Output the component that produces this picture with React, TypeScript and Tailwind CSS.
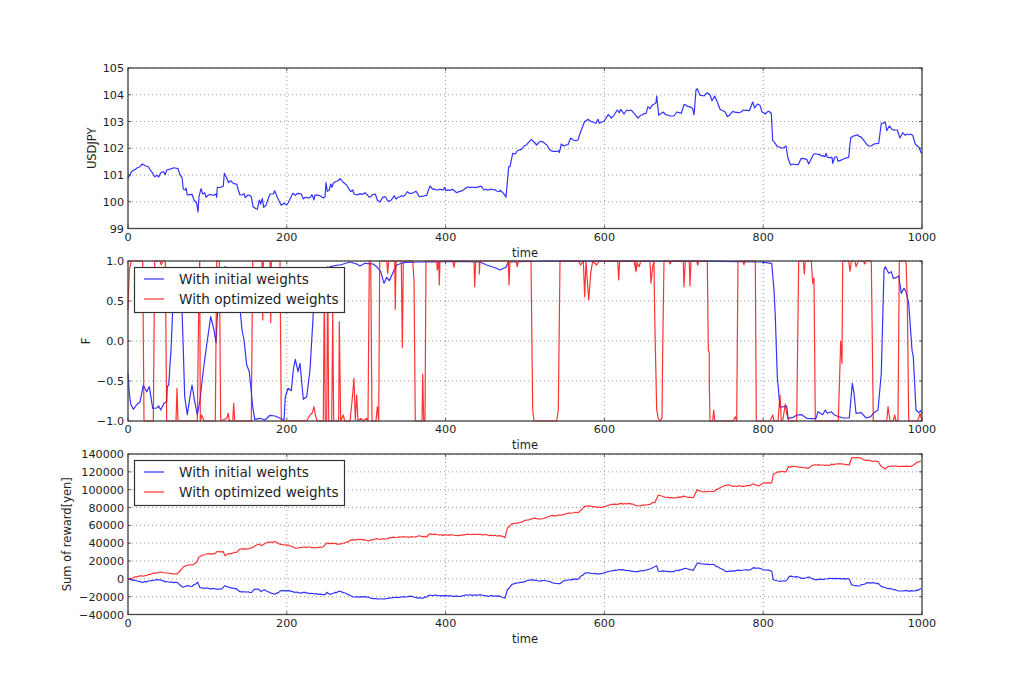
import React from 'react'

const LEFT = 128
const RIGHT = 922
const xTicks = ['0', '200', '400', '600', '800', '1000']

// points are read off crops at 3x, so scale them back to page coords
const crop = (ox: number, oy: number, pts: string) =>
  pts
    .trim()
    .split(/\s+/)
    .map((p) => {
      const [x, y] = p.split(',').map(Number)
      return `${(ox + x / 3).toFixed(1)},${(oy + y / 3).toFixed(1)}`
    })
    .join(' ')

// the price lines are noisier than the points read off, add small fixed wiggle
const rough = (pts: string, amount: number) => {
  const list = pts.split(' ').map((p) => p.split(',').map(Number))
  const out: string[] = []
  list.forEach(([x, y], i) => {
    out.push(`${x},${y}`)
    const next = list[i + 1]
    if (!next || next[0] - x < 2.5) return
    const steps = Math.floor((next[0] - x) / 1.6)
    for (let s = 1; s < steps; s++) {
      const nx = x + ((next[0] - x) * s) / steps
      const ny = y + ((next[1] - y) * s) / steps
      const n = Math.sin(nx * 12.9898 + i) * 43758.5453
      out.push(`${nx.toFixed(1)},${(ny + (n - Math.floor(n) - 0.5) * amount).toFixed(1)}`)
    }
  })
  return out.join(' ')
}

const usdjpy = rough(
  crop(60, 50, `204,385 208,378 214,366 222,360 232,353 240,350 247,342 256,347 265,350 272,362 284,380 292,376 296,381 302,368 310,365 316,374 320,360 335,356 345,354 354,356 360,375 366,382 370,418 376,420 378,414 382,435 396,433 402,450 410,460 414,486 417,440 423,416 428,432 434,428 438,442 448,434 458,436 468,432 470,442 472,412 482,412 490,408 493,370 500,384 506,398 512,392 520,400 530,402 540,435 552,431 556,443 564,435 574,440 579,470 588,476 592,478 598,450 602,462 607,445 611,472 618,466 630,432 640,432 644,422 652,442 664,466 672,460 680,465 690,448 698,430 706,436 716,430 724,432 730,447 740,442 750,443 756,434 762,450 764,436 776,436 790,444 795,440 798,398 802,424 808,420 812,402 816,412 820,400 830,394 840,386 848,395 860,405 872,425 878,420 882,432 895,434 915,428 928,442 938,434 946,432 952,450 960,456 968,442 976,440 984,454 992,452 1003,437 1008,447 1020,440 1035,436 1042,425 1048,430 1060,428 1068,424 1078,440 1100,436 1110,408 1118,418 1150,420 1154,412 1158,422 1175,418 1190,428 1210,420 1220,412 1240,412 1265,410 1272,420 1295,418 1320,424`) +
    ' ' +
    crop(500, 50, `0,420 8,428 18,442 26,350 30,350 38,310 46,312 52,302 65,298 72,288 80,284 94,268 102,276 110,285 122,274 130,276 140,284 148,298 160,304 176,302 178,308 184,282 192,288 204,284 212,264 220,270 234,270 244,240 254,214 264,208 272,214 288,220 294,208 298,220 312,214 325,194 334,204 342,196 352,180 358,188 362,178 372,192 380,180 392,180 402,190 414,204 422,196 438,190 444,170 450,176 458,164 468,158 470,138 476,196 490,186 500,195 510,198 522,198 530,186 544,190 552,164 568,170 578,176 582,195 588,120 592,116 600,136 612,138 622,128 630,134 636,152 644,138 652,156 660,178 668,182 678,190 682,200 690,194 698,184 716,188 730,180 748,182 758,156 764,174 772,162 780,166 786,186 796,192 806,184 814,190 818,272 824,278 832,290 850,294 858,288 864,325 872,345 880,342 895,344 903,326 920,328 926,342 940,314 950,312 975,320 978,310 982,322 996,322 998,340 1004,322 1010,320 1014,334 1030,328 1046,322 1052,264 1060,258 1072,254 1082,260 1092,272 1106,288 1114,288 1122,282 1136,280 1144,220 1156,216 1160,242 1168,228 1176,238 1192,240 1200,264 1208,248 1216,256 1222,252 1238,256 1246,282 1256,290 1265,312`),
  1.4,
)

const fBlue =
  crop(60, 250, `204,370 208,430 212,462 220,478 232,462 240,456 250,406 260,425 268,410 278,475 290,474 296,468 302,480 312,460 320,455 322,410 326,405 333,300 338,180 342,100 360,100 366,180 370,300 374,440 382,494 390,440 396,405 404,455 412,495 420,450 426,395 432,345 440,285 452,200 462,240 468,278 472,200 480,100 495,50 520,60 535,100 540,175 546,240 552,270 560,345 568,365 578,470 584,508 600,505 615,510 630,496 645,498 660,505 672,510 676,440 684,415 694,422 700,360 706,328 714,365 720,340 730,448 740,440 750,360 760,190 780,80 810,50 835,45`) +
  ' ' +
  crop(340, 250, `0,45 30,36 50,42 60,48 75,40 100,42 110,50 122,65 132,100 140,82 148,92 158,70 170,45 190,38 230,36 280,36 340,34 420,36 440,45 470,55 480,60 498,52 505,36 620,33`) +
  ' ' +
  crop(630, 250, `270,34 395,36 425,40 432,120 436,200 442,380 450,472 470,468 474,505 490,502 500,495 515,494 530,505 550,506 558,505 564,485 578,494 586,480 592,490 604,485 612,494 626,500 640,504 658,504 667,400 672,430 678,490 694,488 708,504 722,500 732,488 744,480 754,370 762,60 766,50 776,70 784,65 790,85 800,82 806,78 814,130 822,115 828,125 836,160 846,300 850,320 858,480 866,488 872,482 876,490`)

const fRed =
  crop(60, 250, `204,180 208,60 214,33 248,33 252,513 280,513 284,33 300,33 304,44 308,33 316,33 320,513 348,513 351,415 354,513 412,513 417,100 419,33 421,513 425,495 432,513 466,513 470,33 478,33 482,513 500,505 505,490 508,513 518,513 521,460 524,513 574,513 578,33 606,33 608,210 610,33 630,33 632,218 634,33 660,33 664,513 740,512 750,495 756,490 762,470 766,495 772,513 790,513 793,100 796,513 800,513 803,50 806,513 815,513 818,190 821,513 836,513`) +
  ' ' +
  crop(340, 250, `-2,215 2,513 10,495 14,513 30,513 36,455 42,385 46,510 50,435 54,513 62,505 70,513 80,505 84,513 88,33 92,33 96,513 108,513 112,470 116,513 119,33 140,33 143,70 146,33 164,33 166,178 168,33 184,33 187,293 190,33 218,33 222,90 226,513 232,513 246,513 248,372 251,513 255,513 258,33 290,33 292,60 296,33 298,105 300,33 338,33 342,52 345,33 402,33 404,110 407,33 418,33 418,72 420,33 505,33 507,105 510,33 528,33 532,50 535,33 573,33 578,480 582,513 650,513 655,480 660,33 715,33 722,45 730,33 734,140 738,33 746,150 752,70 758,33 770,45 778,33 833,33 836,90 839,33 885,33 888,65 892,33`) +
  ' ' +
  crop(630, 250, `12,33 18,65 22,40 28,50 32,33 60,33 63,100 68,50 72,33 74,200 80,480 85,505 90,513 96,505 98,300 102,33 118,33 120,42 125,33 160,33 162,110 166,33 178,33 180,108 183,33 200,33 203,45 206,33 232,33 235,300 238,310 238,400 240,513 248,513 251,480 254,513 310,513 316,500 320,513 324,33 338,33 342,44 345,33 376,33 379,513 420,513 428,495 432,513 444,513 450,435 454,513 458,513 466,462 470,490 476,513 500,513 506,33 520,33 523,72 526,33 544,33 548,100 552,84 556,513 625,513 632,274 636,340 638,33 656,33 660,64 664,33 675,33 678,50 685,33 700,33 704,42 708,33 724,33 730,513 770,513 774,470 780,513 790,513 794,495 798,513 804,513 808,33 828,33 832,150 836,513 862,513 866,505 870,490 876,513`)

const sumRed = rough(
  crop(55, 445, `220,402 235,398 250,394 270,392 285,388 300,384 318,381 335,384 350,386 366,387 375,378 385,366 400,360 412,360 425,352 432,336 442,330 460,326 480,326 486,320 505,320 510,332 520,326 545,322 555,312 580,312 595,306 612,297 620,302 640,291 660,290 675,298 700,300 722,310 745,306 780,308 805,306 815,294 835,296 860,296 880,290 890,284 920,284 940,288 960,282 990,282 1010,278 1040,276 1075,276 1095,273 1115,276 1125,266 1150,270 1190,270 1210,272 1240,268 1270,268 1300,271 1305,272`) +
    ' ' +
    crop(490, 445, `0,271 30,272 45,278 52,250 66,236 90,232 110,225 130,220 155,222 180,213 210,211 235,204 265,203 285,184 305,184 335,188 360,180 390,176 420,176 445,183 470,180 495,172 505,150 525,157 555,159 585,154 610,158 622,134 640,141 670,140 690,128 715,120 730,124 780,122 790,116 805,123 820,114 845,114 850,88 865,80 888,80 895,65 925,66 955,70 970,60 1010,60 1050,56 1078,60 1085,38 1105,38 1130,46 1165,50 1172,62 1185,72 1195,64 1225,64 1265,64 1280,52 1293,48`),
  0.9,
)

const sumBlue = rough(
  crop(55, 445, `220,402 240,406 260,412 280,409 300,405 320,406 340,411 365,412 385,427 395,422 412,424 428,412 435,428 445,430 470,431 500,432 510,422 525,428 545,431 555,440 590,442 600,432 610,432 618,440 628,434 640,440 660,448 680,436 700,437 720,442 760,444 790,448 812,448 815,442 825,448 855,439 870,444 895,456 930,455 950,460 975,462 1000,460 1015,458 1040,456 1065,454 1100,460 1115,456 1125,450 1150,452 1190,453 1210,454 1240,450 1280,450 1300,454 1305,453`) +
    ' ' +
    crop(490, 445, `0,452 30,454 45,460 52,435 66,418 95,412 122,404 145,408 165,406 190,414 210,416 220,408 245,403 265,402 285,384 310,386 335,386 355,380 385,374 410,376 440,380 470,375 500,362 505,378 550,380 585,370 610,376 622,354 650,358 670,358 690,370 710,380 750,376 780,374 790,368 815,372 845,378 850,404 865,408 888,408 898,394 925,396 935,400 958,396 975,404 1030,400 1078,402 1085,420 1105,423 1135,413 1165,415 1175,425 1190,430 1205,432 1230,438 1265,437 1285,436 1293,430`),
  0.9,
)

type PanelProps = {
  top: number
  height: number
  axisTop: number
  axisBottom: number
  yLabels: string[]
  yTitle: string
  yTitleX: number
  timeY: number
  lines: { points: string; color: string }[]
  legend?: boolean
}

const Panel = ({ top, height, axisTop, axisBottom, yLabels, yTitle, yTitleX, timeY, lines, legend }: PanelProps) => {
  const span = axisBottom - axisTop
  const yAt = (i: number) => axisTop + (span * i) / (yLabels.length - 1)
  const xAt = (i: number) => LEFT + ((RIGHT - LEFT) * i) / 5
  const midY = (axisTop + axisBottom) / 2

  return (
    <svg width={1024} height={height} viewBox={`0 ${top} 1024 ${height}`} className="block overflow-visible text-[11.2px] fill-[#1f1f1f]">
      {yLabels.map((_, i) => (
        <React.Fragment key={i}>
          <line x1={LEFT} x2={RIGHT} y1={yAt(i)} y2={yAt(i)} stroke="#999" strokeDasharray="1 3" />
          <line x1={LEFT} x2={LEFT + 3} y1={yAt(i)} y2={yAt(i)} stroke="#555" />
          <line x1={RIGHT - 3} x2={RIGHT} y1={yAt(i)} y2={yAt(i)} stroke="#555" />
        </React.Fragment>
      ))}
      {xTicks.map((_, i) => (
        <React.Fragment key={i}>
          <line x1={xAt(i)} x2={xAt(i)} y1={axisTop} y2={axisBottom} stroke="#999" strokeDasharray="1 3" />
          <line x1={xAt(i)} x2={xAt(i)} y1={axisTop} y2={axisTop + 3} stroke="#555" />
          <line x1={xAt(i)} x2={xAt(i)} y1={axisBottom - 3} y2={axisBottom} stroke="#555" />
        </React.Fragment>
      ))}
      {lines.map((l) => (
        <polyline key={l.color} points={l.points} fill="none" stroke={l.color} strokeWidth={1.2} strokeOpacity={0.8} strokeLinejoin="round" />
      ))}
      <rect x={LEFT} y={axisTop} width={RIGHT - LEFT} height={span} fill="none" stroke="#444" strokeWidth={1.3} />
      {yLabels.map((t, i) => (
        <text key={t} x={LEFT - 4} y={yAt(i) + 4} textAnchor="end">
          {t}
        </text>
      ))}
      {xTicks.map((t, i) => (
        <text key={t} x={xAt(i)} y={axisBottom + 12} textAnchor="middle">
          {t}
        </text>
      ))}
      <text x={(LEFT + RIGHT) / 2} y={timeY} textAnchor="middle" className="text-[11.5px]">
        time
      </text>
      <text x={yTitleX} y={midY} textAnchor="middle" transform={`rotate(-90 ${yTitleX} ${midY})`} className="text-[11.5px]">
        {yTitle}
      </text>
      {legend && (
        <g>
          <rect x={134.5} y={axisTop + 6.5} width={210} height={45} fill="white" stroke="#333" strokeWidth={1.2} />
          <line x1={144} x2={164} y1={axisTop + 18} y2={axisTop + 18} stroke="#0000ff" strokeOpacity={0.8} strokeWidth={1.2} />
          <line x1={144} x2={164} y1={axisTop + 38} y2={axisTop + 38} stroke="#ff0000" strokeOpacity={0.8} strokeWidth={1.2} />
          <text x={179} y={axisTop + 23} className="text-[13.6px]">
            With initial weights
          </text>
          <text x={179} y={axisTop + 43} className="text-[13.6px]">
            With optimized weights
          </text>
        </g>
      )}
    </svg>
  )
}

export default function App() {
  return (
    <div className="flex h-[683px] w-[1024px] flex-col overflow-hidden bg-white font-['DejaVu_Sans',sans-serif]">
      <Panel
        top={0}
        height={245}
        axisTop={68}
        axisBottom={228.5}
        yLabels={['105', '104', '103', '102', '101', '100', '99']}
        yTitle="USDJPY"
        yTitleX={96}
        timeY={257}
        lines={[{ points: usdjpy, color: '#0000ff' }]}
      />
      <Panel
        top={245}
        height={193}
        axisTop={261}
        axisBottom={421}
        yLabels={['1.0', '0.5', '0.0', '\u22120.5', '\u22121.0']}
        yTitle="F"
        yTitleX={90}
        timeY={449}
        lines={[
          { points: fBlue, color: '#0000ff' },
          { points: fRed, color: '#ff0000' },
        ]}
        legend
      />
      <Panel
        top={438}
        height={245}
        axisTop={454}
        axisBottom={614.5}
        yLabels={['140000', '120000', '100000', '80000', '60000', '40000', '20000', '0', '\u221220000', '\u221240000']}
        yTitle="Sum of reward[yen]"
        yTitleX={71}
        timeY={643}
        lines={[
          { points: sumBlue, color: '#0000ff' },
          { points: sumRed, color: '#ff0000' },
        ]}
        legend
      />
    </div>
  )
}
